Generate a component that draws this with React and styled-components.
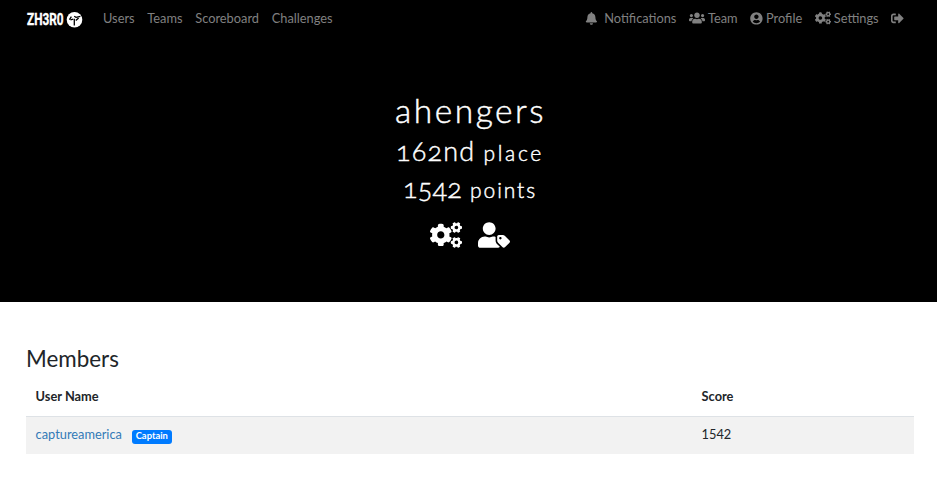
import React from "react";
import styled, { createGlobalStyle } from "styled-components";
import { FaBell, FaUsers, FaUserCircle, FaCogs, FaSignOutAlt, FaUserTag } from "react-icons/fa";

const GlobalStyle = createGlobalStyle`
  *, *::before, *::after { box-sizing: border-box; }
  body {
    margin: 0;
    background: #fff;
    color: #212529;
    font: 400 12.8px/19.2px Lato, "Liberation Sans", sans-serif;
  }
`;

const Page = styled.div`
  height: 486px;
  overflow: hidden;
`;

const Banner = styled.header`
  height: 302px;
  background: #000;
`;

const Navbar = styled.nav`
  display: flex;
  align-items: center;
  height: 38px;
  padding: 0 26.4px 0 26px;
`;

const Brand = styled.a`
  display: flex;
  width: 58px;
  margin-right: 12.6px;
`;

const LogoText = styled.text`
  fill: #fff;
  stroke: #fff;
  stroke-width: 0.4px;
  font: 700 16px Roboto, "Liberation Sans", sans-serif;
`;

const NavGroup = styled.div`
  display: flex;
  margin-left: ${(p) => (p.$end ? "auto" : "0")};
`;

const NavLink = styled.a`
  display: flex;
  align-items: center;
  gap: ${(p) => p.$gap || 2.8}px;
  padding: 0 6.4px;
  color: #808080;
  white-space: nowrap;
  svg { display: block; margin-top: -1px; }
`;

const Summary = styled.div`
  display: flex;
  flex-direction: column;
  align-items: center;
  padding: 53px 23px 0 26px;
  color: #fff;
  font-variant-numeric: oldstyle-nums;
  -webkit-text-stroke: 0.45px #fff;
`;

const TeamName = styled.h1`
  margin: 0 0 2px 1px;
  font-weight: 300;
  font-size: 33.5px;
  line-height: 39px;
  letter-spacing: 2.5px;
`;

const Stat = styled.h2`
  display: flex;
  align-items: baseline;
  gap: 8px;
  margin: 0;
  font-weight: 300;
  font-size: 27px;
  line-height: 37px;
  letter-spacing: ${(p) => p.$tracking}px;
`;

const StatUnit = styled.small`
  font-size: 21px;
  line-height: 1;
  letter-spacing: ${(p) => p.$tracking}px;
`;

const Actions = styled.div`
  display: flex;
  gap: 16px;
  margin-top: 13px;
  -webkit-text-stroke: 0;
  svg { display: block; }
`;

const Content = styled.main`
  padding: 43px 23px 0 26px;
`;

const SectionTitle = styled.h3`
  margin: 0 0 5px;
  font-weight: 400;
  font-size: 22.4px;
  line-height: 28px;
`;

const Table = styled.table`
  width: 100%;
  border-collapse: collapse;
  table-layout: fixed;
`;

const HeadCell = styled.th`
  height: 38px;
  width: ${(p) => p.$width || "auto"};
  padding: 0 9.6px;
  border-bottom: 1px solid #dee2e6;
  text-align: left;
  font-weight: 700;
`;

const Cell = styled.td`
  height: 38px;
  padding: 0 9.6px 1px;
  background: #f2f2f2;
`;

const Member = styled.div`
  display: flex;
  align-items: center;
  gap: 10px;
`;

const MemberLink = styled.a`
  color: #337ab7;
`;

const Badge = styled.span`
  height: 14px;
  margin-top: 4px;
  padding: 0 3.8px;
  border-radius: 3px;
  background: #007bff;
  color: #fff;
  font-weight: 700;
  font-size: 9.4px;
  line-height: 12px;
`;

const Logo = () => (
  <svg width="58" height="18" viewBox="0 0 58 18" fill="none">
    <LogoText x="1" y="15" textLength="36.5" lengthAdjust="spacingAndGlyphs">ZH3R0</LogoText>
    <circle cx="48.5" cy="9.8" r="7.8" fill="#fff" />
    <path d="M43.4 9.6L45.4 6.6M44.5 9.8L47.2 9.2M48.2 6.3L50 7.4L54.4 6.4M48.3 8.8V15.4M49.8 10.6L52.6 8" stroke="#000" strokeWidth="1.3" />
  </svg>
);

export default function App() {
  return (
    <Page>
      <GlobalStyle />
      <Banner>
        <Navbar>
          <Brand aria-label="ZH3R0"><Logo /></Brand>
          <NavGroup>
            <NavLink>Users</NavLink>
            <NavLink>Teams</NavLink>
            <NavLink>Scoreboard</NavLink>
            <NavLink>Challenges</NavLink>
          </NavGroup>
          <NavGroup $end>
            <NavLink $gap={6}><FaBell size={12.8} />Notifications</NavLink>
            <NavLink><FaUsers size={16} />Team</NavLink>
            <NavLink><FaUserCircle size={12.8} />Profile</NavLink>
            <NavLink><FaCogs size={16} />Settings</NavLink>
            <NavLink><FaSignOutAlt size={12.8} /></NavLink>
          </NavGroup>
        </Navbar>
        <Summary>
          <TeamName>ahengers</TeamName>
          <Stat $tracking={1.2}>162nd <StatUnit $tracking={2.7}>place</StatUnit></Stat>
          <Stat $tracking={0.2}>1542 <StatUnit $tracking={1.9}>points</StatUnit></Stat>
          <Actions>
            <FaCogs size={32} />
            <FaUserTag size={32} />
          </Actions>
        </Summary>
      </Banner>
      <Content>
        <SectionTitle>Members</SectionTitle>
        <Table>
          <thead>
            <tr>
              <HeadCell>User Name</HeadCell>
              <HeadCell $width="222px">Score</HeadCell>
            </tr>
          </thead>
          <tbody>
            <tr>
              <Cell>
                <Member>
                  <MemberLink>captureamerica</MemberLink>
                  <Badge>Captain</Badge>
                </Member>
              </Cell>
              <Cell>1542</Cell>
            </tr>
          </tbody>
        </Table>
      </Content>
    </Page>
  );
}
